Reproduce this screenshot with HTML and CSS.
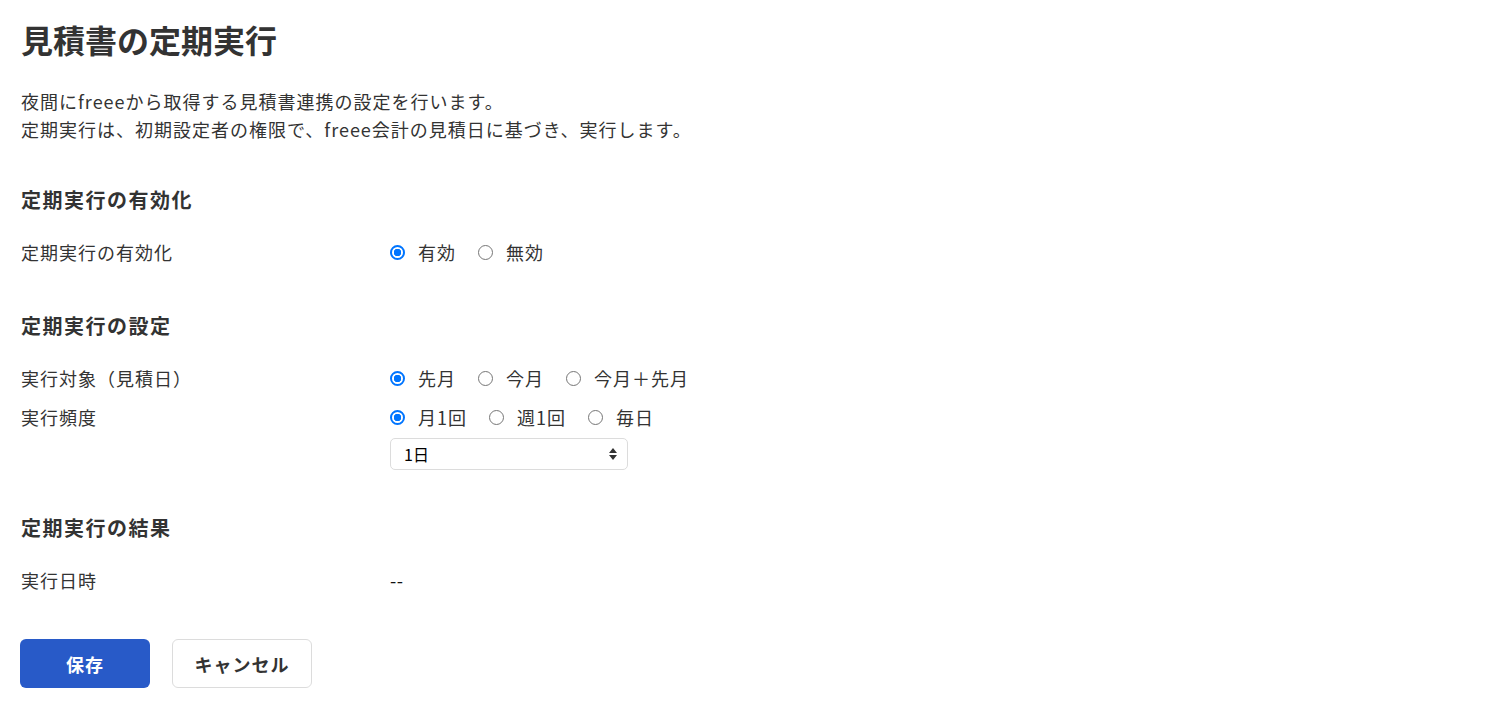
FILE: index.html
```html
<!DOCTYPE html>
<html lang="ja">
<head>
<meta charset="utf-8">
<title>見積書の定期実行</title>
<link rel="stylesheet" href="styles.css">
</head>
<body>
<main class="page">
  <h1 class="title">見積書の定期実行</h1>
  <div class="desc">
    <p>夜間にfreeeから取得する見積書連携の設定を行います。</p>
    <p>定期実行は、初期設定者の権限で、freee会計の見積日に基づき、実行します。</p>
  </div>

  <section class="section s1">
    <h2 class="section-title">定期実行の有効化</h2>
    <div class="row">
      <div class="label">定期実行の有効化</div>
      <div class="value">
        <div class="radios">
          <label class="radio"><input type="radio" name="enable" checked><span>有効</span></label>
          <label class="radio"><input type="radio" name="enable"><span>無効</span></label>
        </div>
      </div>
    </div>
  </section>

  <section class="section s2">
    <h2 class="section-title">定期実行の設定</h2>
    <div class="row">
      <div class="label">実行対象（見積日）</div>
      <div class="value">
        <div class="radios">
          <label class="radio"><input type="radio" name="target" checked><span>先月</span></label>
          <label class="radio"><input type="radio" name="target"><span>今月</span></label>
          <label class="radio"><input type="radio" name="target"><span>今月＋先月</span></label>
        </div>
      </div>
    </div>
    <div class="row row-tight">
      <div class="label">実行頻度</div>
      <div class="value">
        <div class="radios">
          <label class="radio"><input type="radio" name="freq" checked><span>月1回</span></label>
          <label class="radio"><input type="radio" name="freq"><span>週1回</span></label>
          <label class="radio"><input type="radio" name="freq"><span>毎日</span></label>
        </div>
        <div class="select">
          <span class="select-text">1日</span>
          <svg class="select-arrow" width="8" height="14" viewBox="0 0 8 14"><path d="M4 1 L8 6 L0 6 Z M0 8 L8 8 L4 13 Z" fill="#333"/></svg>
        </div>
      </div>
    </div>
  </section>

  <section class="section s3">
    <h2 class="section-title">定期実行の結果</h2>
    <div class="row">
      <div class="label">実行日時</div>
      <div class="value"><span class="dash">--</span></div>
    </div>
  </section>

  <div class="actions">
    <button class="btn btn-primary" type="button">保存</button>
    <button class="btn btn-secondary" type="button">キャンセル</button>
  </div>
</main>
</body>
</html>
```

FILE: styles.css
```css
html, body {
  margin: 0;
  padding: 0;
  background: #fff;
}
body {
  font-family: "Noto Sans CJK JP", "Noto Sans", sans-serif;
  color: #333;
  font-size: 18px;
  letter-spacing: 1px;
}
.page {
  padding: 19px 20px 0 21px;
}
.title {
  margin: 0;
  font-size: 32px;
  line-height: 40px;
  font-weight: 700;
  letter-spacing: 0;
  color: #333;
}
.desc {
  margin-top: 28px;
}
.desc p {
  margin: 0;
  line-height: 28px;
}
.section-title {
  margin: 0;
  font-size: 20px;
  line-height: 28px;
  font-weight: 700;
  letter-spacing: 1.5px;
}
.s1 { margin-top: 43px; }
.s2 { margin-top: 48px; }
.s3 { margin-top: 44px; }
.section-title + .row { margin-top: 26px; }
.row {
  display: flex;
  line-height: 24px;
}
.row-tight { margin-top: 15px; }
.label {
  width: 369px;
  flex: none;
}
.value {
  display: flex;
  flex-direction: column;
  gap: 9px;
}
.radios {
  display: flex;
  gap: 22px;
}
.radio {
  display: flex;
  align-items: center;
  gap: 13px;
}
.radio input {
  appearance: none;
  -webkit-appearance: none;
  margin: 0;
  width: 15px;
  height: 15px;
  border-radius: 50%;
  border: 1px solid #767676;
  background: #fff;
  box-sizing: border-box;
}
.radio input:checked {
  border: 2px solid #0075ff;
  background: radial-gradient(circle, #0075ff 0 3.5px, #fff 4px);
}
.select {
  display: flex;
  align-items: center;
  justify-content: space-between;
  box-sizing: border-box;
  width: 238px;
  height: 32px;
  border: 1px solid #dcdcdc;
  border-radius: 5px;
  padding: 0 10px 0 13px;
  color: #000;
  font-size: 16px;
  letter-spacing: 0;
}
.dash {
  color: #111;
  letter-spacing: 0.5px;
}
.actions {
  display: flex;
  gap: 22px;
  margin-top: 47px;
  margin-left: -1px;
}
.btn {
  height: 49px;
  border-radius: 6px;
  font-family: "Noto Sans CJK JP", "Noto Sans", sans-serif;
  font-size: 18px;
  font-weight: 700;
  letter-spacing: 1px;
  cursor: pointer;
  box-sizing: border-box;
}
.btn-primary {
  width: 130px;
  background: #285ac8;
  color: #fff;
  border: none;
}
.btn-secondary {
  width: 140px;
  background: #fff;
  color: #333;
  border: 1px solid #dcdcdc;
}
```
